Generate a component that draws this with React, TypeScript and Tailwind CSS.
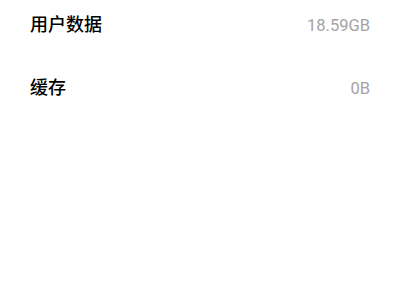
const rows = [
  { label: '用户数据', value: '18.59GB' },
  { label: '缓存', value: '0B' },
];

export default function App() {
  return (
    <div className="w-[400px] h-[300px] bg-white overflow-hidden px-[30px]">
      <div className="flex flex-col gap-[15px]">
        {rows.map((r) => (
          <div key={r.label} className="flex h-12 items-center">
            <div className="flex w-full items-baseline justify-between">
              <span className="text-[18px] font-medium text-black [font-family:'Noto_Sans_CJK_SC',sans-serif]">
                {r.label}
              </span>
              <span className="text-[16.5px] text-[#a3a3a3] [font-family:Roboto,'Noto_Sans',sans-serif]">
                {r.value}
              </span>
            </div>
          </div>
        ))}
      </div>
    </div>
  );
}
